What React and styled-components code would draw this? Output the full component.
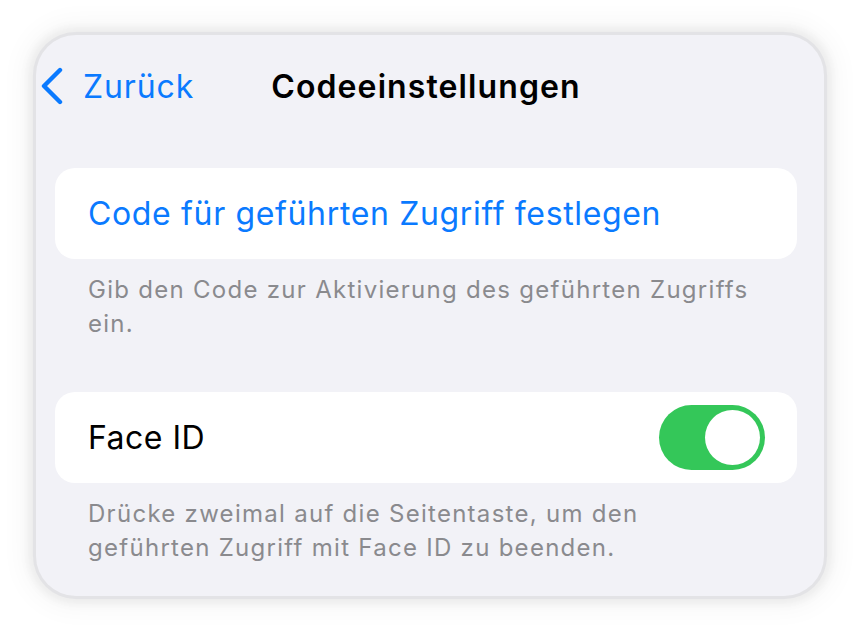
import React from 'react';
import styled, { createGlobalStyle } from 'styled-components';

const Global = createGlobalStyle`
  html, body {
    margin: 0;
    padding: 0;
    background: #fff;
  }
  body {
    font-family: Inter, "Noto Sans", "Liberation Sans", sans-serif;
    -webkit-font-smoothing: antialiased;
  }
`;

const Page = styled.div`
  width: 860px;
  height: 632px;
  padding: 35px 36px 36px 36px;
  box-sizing: border-box;
`;

const Screen = styled.div`
  width: 788px;
  height: 561px;
  box-sizing: border-box;
  background: #f2f2f7;
  border-radius: 40px;
  box-shadow: 0 0 0 3px #e3e3e6, 0 0 8px 8px rgba(0, 0, 0, 0.05), 0 0 26px 14px rgba(0, 0, 0, 0.035);
  padding: 0 27px 0 19px;
  overflow: hidden;
`;

const NavBar = styled.div`
  height: 102px;
  display: grid;
  grid-template-columns: 1fr auto 1fr;
  align-items: center;
`;

const BackButton = styled.button`
  display: flex;
  align-items: center;
  gap: 19px;
  margin-left: -15px;
  padding: 0;
  border: 0;
  background: none;
  color: #0a7aff;
  font: 400 32px Inter, "Noto Sans", sans-serif;
  letter-spacing: 0.9px;
  cursor: pointer;
  justify-self: start;
`;

const Title = styled.h1`
  margin: 0;
  font-size: 32px;
  font-weight: 600;
  color: #000;
  letter-spacing: 1.1px;
`;

const Content = styled.div`
  padding-top: 31px;
`;

const Group = styled.div`
  background: #fff;
  border-radius: 20px;
  height: 91px;
  padding: 0 33px;
  display: flex;
  align-items: center;
  justify-content: space-between;
  margin-top: ${p => (p.$first ? '0' : '51px')};
`;

const RowLabel = styled.span`
  font-size: 32px;
  letter-spacing: ${p => (p.$accent ? '0.65px' : '0.5px')};
  color: ${p => (p.$accent ? '#0a7aff' : '#000')};
`;

const Footer = styled.p`
  margin: 0;
  padding: 14px 30px 0 33px;
  font-size: 24px;
  line-height: 34px;
  color: #8a8a8e;
  letter-spacing: 1.28px;
`;

const Switch = styled.div`
  width: 106px;
  height: 65px;
  border-radius: 33px;
  background: ${p => (p.$on ? '#34c759' : '#e9e9eb')};
  display: flex;
  align-items: center;
  justify-content: ${p => (p.$on ? 'flex-end' : 'flex-start')};
  padding: 0 5px;
  box-sizing: border-box;
  margin-right: -1px;
`;

const Knob = styled.div`
  width: 55px;
  height: 55px;
  border-radius: 50%;
  background: #fff;
`;

const Chevron = () => (
  <svg width="24" height="38" viewBox="0 0 24 38" fill="none">
    <path d="M20 3 L4 19 L20 35" stroke="#0a7aff" strokeWidth="4.4" strokeLinecap="round" strokeLinejoin="round" />
  </svg>
);

export default function App() {
  return (
    <Page>
      <Global />
      <Screen>
        <NavBar>
          <BackButton>
            <Chevron />
            Zurück
          </BackButton>
          <Title>Codeeinstellungen</Title>
          <span />
        </NavBar>
        <Content>
          <Group $first>
            <RowLabel $accent>Code für geführten Zugriff festlegen</RowLabel>
          </Group>
          <Footer>Gib den Code zur Aktivierung des geführten Zugriffs ein.</Footer>
          <Group>
            <RowLabel>Face ID</RowLabel>
            <Switch $on>
              <Knob />
            </Switch>
          </Group>
          <Footer>Drücke zweimal auf die Seitentaste, um den geführten Zugriff mit Face ID zu beenden.</Footer>
        </Content>
      </Screen>
    </Page>
  );
}
